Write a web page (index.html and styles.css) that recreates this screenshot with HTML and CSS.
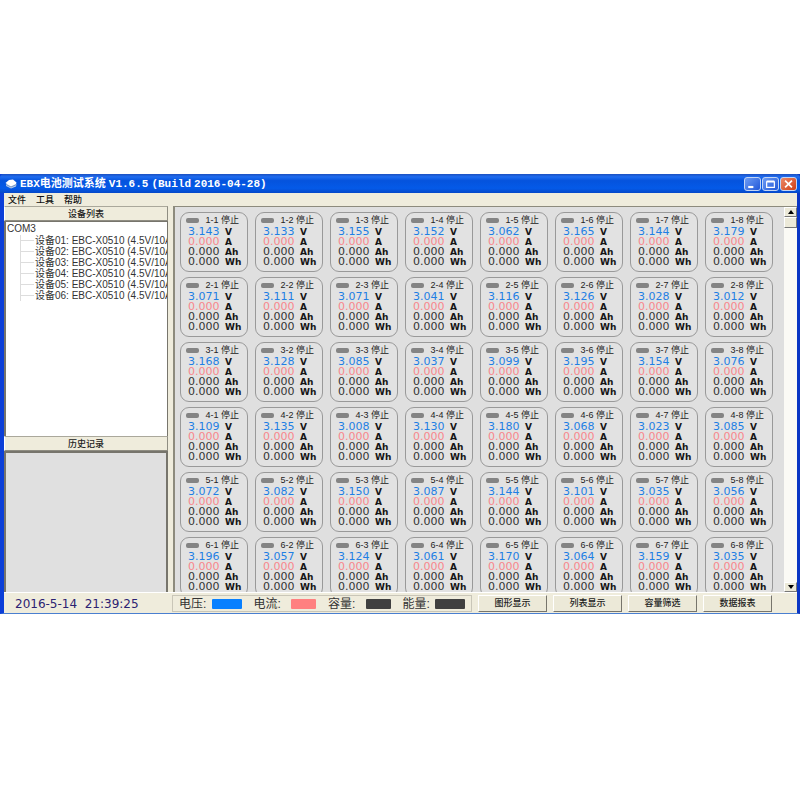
FILE: index.html
```html
<!DOCTYPE html>
<html lang="zh-CN">
<head>
<meta charset="utf-8">
<title>EBX电池测试系统</title>
<link rel="stylesheet" href="styles.css">
</head>
<body>
<div class="window">
  <header class="titlebar">
    <svg class="logo" viewBox="0 0 12 10" aria-hidden="true">
      <path d="M1 5 6 2.500 11.500 5 11 7.500 6 9.500 1 7Z" fill="#b8cdea"/>
      <path d="M.5 4 4 1 8 .5 11.500 3.500 11 5 6 7.500Z" fill="#fff"/>
      <path d="M1 5.500 6 8 11.500 5.500" fill="none" stroke="#5378b8" stroke-width=".7"/>
    </svg>
    <h1 class="title"><span>EBX电池测试系统</span> <span>V1.6.5</span> <span>(Build</span> <span>2016-04-28)</span></h1>
    <div class="controls">
      <button class="control" aria-label="最小化"><svg viewBox="0 0 16 14"><path d="M3 10.500h6" stroke="#fff" stroke-width="2.500"/></svg></button>
      <button class="control" aria-label="最大化"><svg viewBox="0 0 16 14"><path d="M3.500 4.500h9v6.500h-9zM3.500 3.500h9" fill="none" stroke="#fff" stroke-width="1.400"/></svg></button>
      <button class="control control-close" aria-label="关闭"><svg viewBox="0 0 16 14"><path d="m4 3 8 8m0-8-8 8" stroke="#fff" stroke-width="2"/></svg></button>
    </div>
  </header>
  <nav class="menu">
    <button>文件</button>
    <button>工具</button>
    <button>帮助</button>
  </nav>
  <main class="main">
    <aside class="sidebar">
      <h2 class="heading">设备列表</h2>
      <div class="tree">
        <div>COM3</div>
        <ul class="devices">
          <li>设备01: EBC-X0510 (4.5V/10A</li>
          <li>设备02: EBC-X0510 (4.5V/10A</li>
          <li>设备03: EBC-X0510 (4.5V/10A</li>
          <li>设备04: EBC-X0510 (4.5V/10A</li>
          <li>设备05: EBC-X0510 (4.5V/10A</li>
          <li>设备06: EBC-X0510 (4.5V/10A</li>
        </ul>
      </div>
      <h2 class="heading">历史记录</h2>
      <div class="history"></div>
    </aside>
    <section class="panel">
      <div class="cells" id="cells"></div>
      <div class="scrollbar">
        <button class="arrow" aria-label="向上"><svg viewBox="0 0 6 4"><path d="M0 4 3 0l3 4z"/></svg></button>
        <div class="thumb"></div>
        <button class="arrow arrow-down" aria-label="向下"><svg viewBox="0 0 6 4"><path d="m0 0 3 4 3-4z"/></svg></button>
      </div>
    </section>
  </main>
  <footer class="status">
    <time class="clock">2016-5-14&nbsp; 21:39:25</time>
    <div class="bottom">
      <div class="legend">
        <div class="key">电压:<span class="swatch volt wide"></span></div>
        <div class="key">电流:<span class="swatch amp"></span></div>
        <div class="key">容量:<span class="swatch dark"></span></div>
        <div class="key">能量:<span class="swatch dark wide"></span></div>
      </div>
      <div class="actions">
        <button>图形显示</button>
        <button>列表显示</button>
        <button>容量筛选</button>
        <button>数据报表</button>
      </div>
    </div>
  </footer>
</div>
<script src="app.js"></script>
</body>
</html>
```
FILE: styles.css
```css
* { box-sizing: border-box; }

body {
  margin: 0;
  background: #fff;
  font-family: "Liberation Sans", "Noto Sans CJK SC", sans-serif;
  font-size: 10px;
  color: #333;
}

button { font: inherit; color: inherit; padding: 0; margin: 0; }
h1, h2, ul { margin: 0; padding: 0; }

.window {
  display: flex;
  flex-direction: column;
  height: 55vh;
  min-height: 440px;
  margin-top: 174px;
  border-left: 4px solid #0c3fd8;
  border-right: 3px solid #0b36c4;
  border-bottom: 1px solid #4a7fd0;
  background: #efecdc;
}

.titlebar {
  display: flex;
  align-items: center;
  flex: none;
  height: 19px;
  margin: 0 -3px 0 -4px;
  padding: 0 3px 0 5px;
  border-radius: 4px 4px 0 0;
  background: linear-gradient(#1c50c0, #1f6cf0 15%, #0553dd 35%, #045ae8 75%, #0648c8);
}
.logo { width: 12px; height: 10px; margin-right: 3px; }
.title {
  display: flex;
  gap: 3px;
  flex: 1;
  font: bold 11px/18px "Liberation Mono", "Noto Sans CJK SC", monospace;
  color: #fff;
  white-space: nowrap;
}
.controls { display: flex; gap: 1px; }
.control {
  width: 17px;
  height: 14px;
  border: 1px solid #c3d5f5;
  border-radius: 3px;
  background: linear-gradient(135deg, #6d9cf5, #2158d8);
}
.control svg { display: block; width: 100%; height: 100%; }
.control-close { background: linear-gradient(135deg, #ec8868, #cf3f16); }

.menu {
  display: flex;
  gap: 10px;
  flex: none;
  height: 13px;
  padding-left: 4px;
}
.menu button {
  border: 0;
  background: none;
  font-size: 9px;
  line-height: 12px;
  font-weight: 500;
  color: #111;
}

.main { display: flex; flex: 1; min-height: 0; gap: 5px; }

.sidebar { display: flex; flex-direction: column; flex: none; width: 164px; }
.heading {
  flex: none;
  height: 15px;
  border: 1px solid #8f8d82;
  border-top-color: #aaa89b;
  border-left-color: #fff;
  font-size: 9px;
  line-height: 14px;
  font-weight: 500;
  text-align: center;
  color: #222;
}
.tree, .history {
  min-height: 0;
  overflow: hidden;
  border: 2px solid #77756c;
  border-width: 1px 1px 0 2px;
}
.tree { flex: 20; background: #fff; padding: 1px 0 0 1px; line-height: 12px; white-space: nowrap; }
.history { flex: 13; background: #e0e0e0; border-top-width: 2px; border-right-width: 2px; }
.devices { list-style: none; margin-left: 13px; }
.devices li {
  display: flex;
  align-items: center;
  height: 11px;
  line-height: 11px;
  border-left: 1px solid #ddd;
}
.devices li::before { content: ""; flex: none; width: 13px; margin-right: 1px; border-top: 1px solid #ddd; }

.panel {
  display: flex;
  flex: 1;
  min-width: 0;
  border-left: 2px solid #8d8b7d;
  border-top: 1px solid #8d8b7d;
  background: #dfdfdf;
}
.cells {
  flex: 1;
  display: grid;
  grid-template-columns: repeat(8, 1fr);
  grid-auto-rows: 60px;
  gap: 5px 7px;
  align-content: start;
  overflow: hidden;
  padding: 5px 11px 0 5px;
}
.cell {
  padding: 0 0 0 7px;
  border: 1px solid #999;
  border-radius: 9px;
  background: #e2e2e2;
}
.cell-head {
  display: flex;
  align-items: center;
  justify-content: space-between;
  height: 14px;
  padding-right: 8px;
  font-size: 9px;
  line-height: 14px;
  color: #222;
}
.led { width: 13px; height: 5px; margin-left: -2px; border-radius: 2px; background: #848484; }
.row {
  display: grid;
  grid-template-columns: 34px auto;
  align-items: center;
  column-gap: 3px;
  height: 10px;
  font: 11px/10px "DejaVu Sans", sans-serif;
  color: #333;
}
.row b { font-size: 9px; color: #151515; }
.row.v { color: #1f7fe4; }
.row.a { color: #f8868c; }

.scrollbar { display: flex; flex-direction: column; flex: none; width: 13px; background: #fbfaf5; }
.arrow {
  height: 10px;
  border: 1px solid;
  border-color: #fff #777 #777 #fff;
  background: #ece9d8;
  line-height: 0;
}
.arrow svg { width: 6px; height: 4px; }
.arrow-down { margin-top: auto; }
.thumb { height: 11px; border: 1px solid; border-color: #fff #777 #777 #fff; background: #ece9d8; }

.status { display: flex; flex: none; height: 21px; border-top: 1px solid #fff; }
.clock {
  flex: none;
  width: 168px;
  padding-left: 11px;
  font: 12px/22px "DejaVu Sans", sans-serif;
  color: #2c2272;
}
.bottom {
  display: grid;
  grid-template-columns: 1fr 1fr;
  flex: 1;
  padding: 2px 25px 1px 0;
}
.legend {
  display: grid;
  grid-template-columns: repeat(4, 1fr);
  border: 1px solid #c9c6b8;
}
.key {
  display: flex;
  align-items: center;
  justify-content: space-between;
  padding: 0 6px;
  font-size: 12px;
  line-height: 14px;
}
.legend, .actions { min-width: 0; }
.swatch { width: 25px; height: 10px; border-radius: 1px; }
.swatch.wide { width: 30px; }
.volt { background: #0880ff; }
.amp { background: #ff8080; }
.dark { background: #404040; }
.actions { display: grid; grid-template-columns: repeat(4, 1fr); gap: 6px; padding-left: 6px; }
.actions button {
  border: 1px solid;
  border-color: #fff #77756c #77756c #fff;
  background: #ece9d8;
  font-size: 9px;
  line-height: 13px;
  font-weight: 500;
  color: #222;
}
```
FILE: app.js
```javascript
const voltages = [
  ["3.143", "3.133", "3.155", "3.152", "3.062", "3.165", "3.144", "3.179"],
  ["3.071", "3.111", "3.071", "3.041", "3.116", "3.126", "3.028", "3.012"],
  ["3.168", "3.128", "3.085", "3.037", "3.099", "3.195", "3.154", "3.076"],
  ["3.109", "3.135", "3.008", "3.130", "3.180", "3.068", "3.023", "3.085"],
  ["3.072", "3.082", "3.150", "3.087", "3.144", "3.101", "3.035", "3.056"],
  ["3.196", "3.057", "3.124", "3.061", "3.170", "3.064", "3.159", "3.035"],
];

document.getElementById("cells").innerHTML = voltages
  .flatMap((row, r) => row.map((volts, c) => `
    <article class="cell">
      <div class="cell-head"><i class="led"></i><span>${r + 1}-${c + 1} 停止</span></div>
      <div class="row v">${volts}<b>V</b></div>
      <div class="row a">0.000<b>A</b></div>
      <div class="row">0.000<b>Ah</b></div>
      <div class="row">0.000<b>Wh</b></div>
    </article>`))
  .join("");
```
